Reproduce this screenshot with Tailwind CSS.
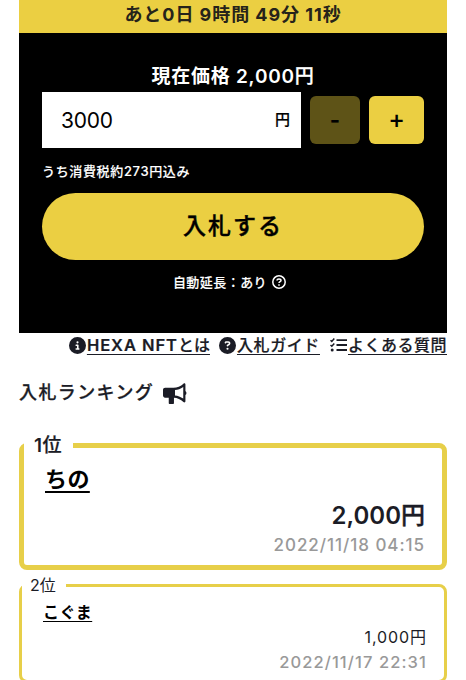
<!DOCTYPE html>
<html lang="ja">

<head>
    <meta charset="UTF-8">
    <meta name="viewport" content="width=device-width, initial-scale=1.0">
    <title>入札 - HEXA NFT</title>
    <script src="https://cdn.jsdelivr.net/npm/@tailwindcss/browser@4"></script>
    <style>
        body {
            font-family: 'Inter', 'Noto Sans CJK JP', sans-serif;
        }
    </style>
</head>

<body class="bg-white text-[#1b1c26] h-[680px] overflow-hidden whitespace-nowrap">
    <main class="ml-[19px] w-[428px]">

        <!-- 残り時間 -->
        <div class="h-[33px] bg-[#ebcf42] text-center text-[18px] leading-[29px] font-bold tracking-[0.95px] text-[#26231a]">
            あと0日 9時間 49分 11秒
        </div>

        <!-- 入札フォーム -->
        <section class="h-[300px] bg-black text-white px-[23px] pt-[30px]">
            <p class="h-[29px] text-center text-[19px] leading-[28px] font-semibold tracking-[0.75px]">現在価格 2,000<span class="font-medium [-webkit-text-stroke:0.3px]">円</span></p>
            <div class="flex items-center">
                <div class="w-[259px] h-[56px] bg-white text-black flex items-center justify-between pl-[19px] pr-[11px]">
                    <span class="pt-[2px] text-[21px] tracking-[-0.2px]">3000</span>
                    <span class="text-[15px] font-medium [-webkit-text-stroke:0.2px]">円</span>
                </div>
                <button class="ml-[9px] w-[50px] h-[48px] rounded-[6px] bg-[#5e5317] text-black text-[22px] font-bold">-</button>
                <button class="ml-[9px] w-[55px] h-[48px] rounded-[6px] bg-[#ebcf42] text-black text-[25px] font-medium">+</button>
            </div>
            <p class="mt-[12px] h-[33px] text-[13px] leading-[22px] font-medium tracking-[0.65px] [-webkit-text-stroke:0.15px]">うち消費税約273円込み</p>
            <button class="block w-[382px] h-[67px] rounded-full bg-[#ebcf42] text-black text-[23px] font-medium tracking-[2px] [-webkit-text-stroke:0.4px]">入札する</button>
            <p class="mt-[11px] pr-[7px] flex items-center justify-center text-[13px] leading-[22px] font-medium tracking-[0.45px] [-webkit-text-stroke:0.15px]">
                自動延長：あり
                <svg class="ml-[5px] size-[14px]" viewBox="0 0 14 14" fill="none" stroke="currentColor" stroke-width="1.5">
                    <circle cx="7" cy="7" r="6.2" />
                    <path d="M5 5.6C5 4.5 5.9 3.9 7 3.9s2 .6 2 1.6c0 1.2-2 1.3-2 2.6" />
                    <path d="M7 9.2v1.5" />
                </svg>
            </p>
        </section>

        <!-- ヘルプリンク -->
        <nav class="h-[24px] flex items-center justify-end text-[16px] leading-[24px] font-medium [-webkit-text-stroke:0.2px]">
            <svg class="size-[17px] mr-px" viewBox="0 0 512 512" fill="currentColor">
                <path d="M256 512A256 256 0 1 0 256 0a256 256 0 1 0 0 512zM216 336h24V272H216c-13.3 0-24-10.7-24-24s10.7-24 24-24h48c13.3 0 24 10.7 24 24v88h8c13.3 0 24 10.7 24 24s-10.7 24-24 24H216c-13.3 0-24-10.7-24-24s10.7-24 24-24zm40-208a32 32 0 1 1 0 64 32 32 0 1 1 0-64z" />
            </svg>
            <a href="#" class="underline underline-offset-3"><span class="font-semibold text-[16.5px] tracking-[0.95px]">HEXA NFT</span>とは</a>
            <svg class="size-[17px] ml-[9px] mr-px" viewBox="0 0 512 512" fill="currentColor">
                <path d="M256 512A256 256 0 1 0 256 0a256 256 0 1 0 0 512zM169.8 165.3c7.9-22.3 29.1-37.3 52.8-37.3h58.3c34.9 0 63.1 28.3 63.1 63.1c0 22.6-12.1 43.5-31.7 54.8L280 264.4c-.2 13-10.9 23.6-24 23.6c-13.3 0-24-10.7-24-24V250.5c0-8.6 4.6-16.5 12.1-20.8l44.3-25.4c4.7-2.7 7.6-7.7 7.6-13.1c0-8.4-6.8-15.1-15.1-15.1H222.6c-3.4 0-6.4 2.1-7.5 5.3l-.4 1.2c-4.4 12.5-18.2 19-30.6 14.6s-19-18.2-14.6-30.6l.4-1.2zM224 352a32 32 0 1 1 64 0 32 32 0 1 1 -64 0z" />
            </svg>
            <a href="#" class="underline underline-offset-3 tracking-[0.6px]">入札ガイド</a>
            <svg class="w-[17px] h-[14px] ml-[10px] mr-px" viewBox="0 0 17 14" fill="none" stroke="currentColor" stroke-width="1.8">
                <path d="M6.5 2.2H17M6.5 7H17M6.5 12H17" />
                <path d="M.5 2.2l1.3 1.2L4.3.6M.5 7l1.3 1.2L4.3 5.4" stroke-width="1.5" />
                <circle cx="2.2" cy="12" r="1.5" fill="currentColor" stroke="none" />
            </svg>
            <a href="#" class="underline underline-offset-3 tracking-[0.5px]">よくある質問</a>
        </nav>

        <h2 class="mt-[20px] h-[32px] flex items-center text-[18px] leading-[32px] font-medium tracking-[1.4px] [-webkit-text-stroke:0.25px]">
            入札ランキング
            <svg class="ml-[9px] w-[24px] h-[21px]" viewBox="0 0 23 20" fill="currentColor">
                <path fill-rule="evenodd" d="M2 4.500h8c3.500 0 7-1.400 9.600-3.900.7-.7 1.900-.3 1.900.7v6.200c1.300.8 1.300 3.200 0 4v6c0 1-1.200 1.400-1.900.7C17 15.600 13.500 14 10.500 14v5c0 .6-.4 1-1 1H6.500c-.6 0-1-.4-1-1v-5H2c-1.100 0-2-.9-2-2V6.500c0-1.100.9-2 2-2zM11.500 6.700v5.200c2.700.2 5.300 1.200 7.900 3V3.700c-2.600 1.800-5.200 2.800-7.900 3z" />
            </svg>
        </h2>

        <!-- ランキング -->
        <fieldset class="mt-[24px] h-[137px] border-[5px] border-[#e7cf49] rounded-[8px] pl-[21px] pr-[17px]">
            <legend class="-ml-[21px] pt-[2px] pl-[10px] pr-[11px] text-[19px] leading-[22px] font-semibold tracking-[0.4px]">1<span class="font-medium [-webkit-text-stroke:0.25px]">位</span></legend>
            <a href="#" class="block w-fit mt-[6px] text-black text-[22px] leading-[32px] font-semibold tracking-[0.4px] underline underline-offset-4 decoration-2">ちの</a>
            <p class="mt-[5px] text-right text-[24px] leading-[32px] font-semibold">2,000<span class="font-medium [-webkit-text-stroke:0.4px]">円</span></p>
            <p class="text-right text-[17px] leading-[26px] font-medium tracking-[0.95px] text-[#999]">2022/11/18 04:15</p>
        </fieldset>
        <fieldset class="mt-[3px] h-[110px] border-[3px] border-[#e7cf49] rounded-[8px] pl-[21px] pr-[17px]">
            <legend class="-ml-[21px] pl-[8px] pr-[10px] text-[16px] leading-[24px] font-normal">2位</legend>
            <a href="#" class="block w-fit mt-[2px] text-black text-[16px] leading-[26px] font-semibold tracking-[0.4px] underline underline-offset-3">こぐま</a>
            <p class="text-right text-[16px] leading-[24px] tracking-[0.9px]">1,000円</p>
            <p class="text-right text-[16.5px] leading-[26px] font-medium tracking-[1.1px] text-[#999]">2022/11/17 22:31</p>
        </fieldset>
    </main>
</body>

</html>
